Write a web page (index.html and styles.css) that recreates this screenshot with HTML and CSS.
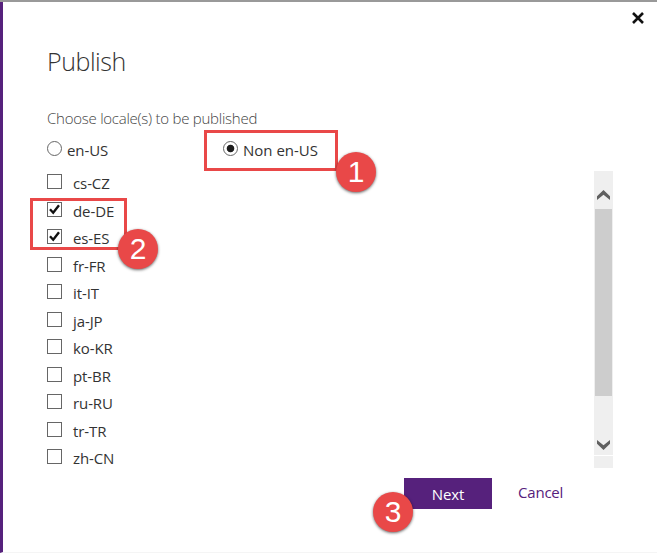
FILE: index.html
```html
<!DOCTYPE html>
<html lang="en">
<head>
<meta charset="utf-8">
<title>Publish</title>
<link rel="stylesheet" href="styles.css">
</head>
<body>
<main class="dialog">
  <button class="close" aria-label="Close"><svg width="12" height="12" viewBox="0 0 12 12"><path d="M1 1l10 10M11 1L1 11"/></svg></button>
  <h1>Publish</h1>
  <p class="prompt">Choose locale(s) to be published</p>
  <div class="modes">
    <label class="mode"><span class="radio"></span><span class="txt">en-US</span></label>
    <label class="mode"><span class="radio on"></span><span class="txt non">Non en-US</span></label>
  </div>
  <div class="panel">
    <ul class="locales">
      <li><span class="box"></span><span class="txt">cs-CZ</span></li>
      <li><span class="box"><svg viewBox="0 0 13 13"><path d="M2 6.3l3.2 3.4L11 2.3"/></svg></span><span class="txt">de-DE</span></li>
      <li><span class="box"><svg viewBox="0 0 13 13"><path d="M2 6.3l3.2 3.4L11 2.3"/></svg></span><span class="txt">es-ES</span></li>
      <li><span class="box"></span><span class="txt">fr-FR</span></li>
      <li><span class="box"></span><span class="txt">it-IT</span></li>
      <li><span class="box"></span><span class="txt">ja-JP</span></li>
      <li><span class="box"></span><span class="txt">ko-KR</span></li>
      <li><span class="box"></span><span class="txt">pt-BR</span></li>
      <li><span class="box"></span><span class="txt">ru-RU</span></li>
      <li><span class="box"></span><span class="txt">tr-TR</span></li>
      <li><span class="box"></span><span class="txt">zh-CN</span></li>
    </ul>
    <div class="scrollbar">
      <svg class="arrow" width="13" height="10" viewBox="0 0 13 10"><path d="M0 6.2L6.5 0 13 6.2V10L6.5 4.7 0 10z"/></svg>
      <div class="thumb"></div>
      <svg class="arrow" width="13" height="10" viewBox="0 0 13 10"><path d="M0 3.8L6.5 10 13 3.8V0L6.5 5.3 0 0z"/></svg>
      <div class="corner"></div>
    </div>
  </div>
  <div class="actions">
    <button class="next">Next</button>
    <a class="cancel">Cancel</a>
  </div>
</main>
<div class="frame frame-mode"></div>
<div class="frame frame-locales"></div>
<div class="badge b1">1</div>
<div class="badge b2">2</div>
<div class="badge b3">3</div>
</body>
</html>
```
FILE: styles.css
```css
* { box-sizing: border-box; }
body {
  margin: 0;
  width: 657px;
  height: 553px;
  overflow: hidden;
  position: relative;
  background: #fff;
  color: #333;
  font-family: "Open Sans", "Noto Sans", sans-serif;
  font-size: 15px;
  border-top: 2px solid #999;
}
body::before {
  content: "";
  position: absolute;
  top: -2px;
  left: 0;
  width: 100%;
  height: 1px;
  background: linear-gradient(90deg, #c4c4c4 323px, #777 323px, #777 324px, #b8b8b8 324px);
}
.dialog {
  height: 551px;
  border-left: 3px solid #56217c;
  border-bottom: 1px solid #f5f5f5;
  padding: 0 44px;
}
button { border: 0; padding: 0; font: inherit; }
.close {
  position: absolute;
  top: 10px;
  left: 632px;
  width: 12px;
  height: 12px;
  background: none;
}
.close svg { display: block; fill: none; stroke: #111; stroke-width: 2.6; }
h1 {
  margin: 0;
  padding-top: 41px;
  height: 101px;
  font-size: 25px;
  line-height: 36px;
  font-weight: 300;
  letter-spacing: -0.45px;
}
.prompt {
  margin: 0;
  height: 34px;
  line-height: 30px;
  font-size: 15px;
  font-weight: 300;
  color: #444;
  letter-spacing: -0.25px;
  white-space: nowrap;
}
.modes { display: grid; grid-template-columns: 176px 1fr; height: 32px; }
.mode { display: flex; gap: 5px; padding-top: 4px; }
.radio {
  width: 15px;
  height: 15px;
  border: 1px solid #666;
  border-radius: 50%;
  background: #fff;
}
.radio.on { background: radial-gradient(circle, #1c1c1c 3.4px, #fff 4.2px); }
.txt { line-height: 20px; letter-spacing: -0.1px; white-space: nowrap; }
.mode .txt { margin-top: -1px; }
.mode .non { letter-spacing: 0; }
.panel { display: flex; justify-content: space-between; height: 299px; }
.locales { list-style: none; margin: 0; padding: 5px 0 0; }
.locales li { display: flex; gap: 11px; height: 27.5px; }
.locales .txt { margin-top: -1px; }
.box { width: 15px; height: 15px; border: 1px solid #666; }
.box svg { display: block; width: 13px; height: 13px; fill: none; stroke: #111; stroke-width: 2.4; }
.scrollbar {
  display: flex;
  flex-direction: column;
  align-items: center;
  width: 19px;
  height: 297px;
  margin-top: 2px;
  padding-top: 19px;
  background: #efefef;
}
.arrow { fill: #606060; }
.thumb { width: 17px; height: 187px; margin: 9px 0 44px; background: #cdcdcd; }
.corner { width: 19px; height: 1px; margin-top: 5px; background: #fff; }
.actions { display: flex; gap: 26px; padding: 10px 0 0 357px; }
.next { width: 88px; height: 31px; background: #56217c; color: #fff; line-height: 33px; letter-spacing: -0.1px; }
.cancel { color: #56217c; line-height: 29px; letter-spacing: -0.2px; }
.frame { position: absolute; border: 3px solid #e94848; }
.frame-mode { left: 204px; top: 128px; width: 134px; height: 41px; }
.frame-locales { left: 30px; top: 196px; width: 97px; height: 52px; }
.badge {
  position: absolute;
  width: 40px;
  height: 40px;
  border-radius: 50%;
  background: #e94848;
  box-shadow: 0 1px 3px rgba(0, 0, 0, .6);
  color: #fff;
  font: 30px/40px "Liberation Sans", Arial, sans-serif;
  text-align: center;
}
.b1 { left: 336px; top: 150px; }
.b2 { left: 118px; top: 227px; }
.b3 { left: 373px; top: 490px; }
```
